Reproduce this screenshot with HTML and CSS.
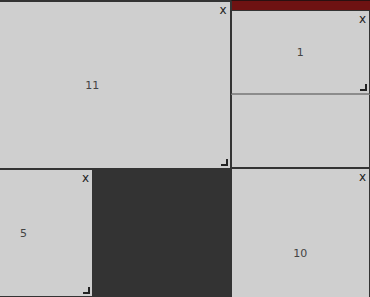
FILE: index.html
```html
<!DOCTYPE html>
<html>
<head>
<meta charset="utf-8">
<link rel="stylesheet" href="styles.css">
</head>
<body>
<div class="board">
  <div class="col col-left">
    <div class="tile tile-11">
      <span class="label">11</span>
      <span class="close">x</span>
      <span class="handle"></span>
    </div>
    <div class="row-bottom">
      <div class="tile tile-5">
        <span class="label">5</span>
        <span class="close">x</span>
        <span class="handle"></span>
      </div>
      <div class="empty"></div>
    </div>
  </div>
  <div class="col col-right">
    <div class="placeholder"></div>
    <div class="tile tile-1">
      <span class="label">1</span>
      <span class="close">x</span>
      <span class="handle"></span>
    </div>
    <div class="tile tile-blank"></div>
    <div class="tile tile-10">
      <span class="label">10</span>
      <span class="close">x</span>
      <span class="handle"></span>
    </div>
  </div>
</div>
</body>
</html>
```
FILE: styles.css
```css
html, body {
  margin: 0;
  padding: 0;
  width: 370px;
  height: 297px;
  overflow: hidden;
  background: #333333;
}
.board {
  display: flex;
  height: 297px;
  overflow: hidden;
  margin-left: -46px;
  font-family: "DejaVu Sans", "Liberation Sans", sans-serif;
}
.col {
  display: flex;
  flex-direction: column;
}
.col-left {
  width: 278px;
  padding-top: 1px;
}
.col-right {
  width: 140px;
}
.tile {
  position: relative;
  flex-shrink: 0;
  box-sizing: border-box;
  background: #cfcfcf;
  border: 1px solid #333333;
  display: flex;
  align-items: center;
  justify-content: center;
}
.tile-11 {
  height: 168px;
}
.row-bottom {
  display: flex;
}
.tile-5 {
  width: 139px;
  height: 128px;
}
.empty {
  flex: 1;
}
.placeholder {
  flex-shrink: 0;
  height: 10px;
  background: #6e1212;
  border-left: 1px solid #333333;
  border-top: 1px solid #2a1010;
  box-sizing: border-box;
}
.tile-1 {
  height: 85px;
  border-bottom: 2px solid #8c8c8c;
}
.tile-blank {
  height: 73px;
  border-top: none;
}
.tile-10 {
  height: 170px;
}
.label {
  font-size: 11px;
  color: #444444;
}
.close {
  position: absolute;
  top: 1px;
  right: 3px;
  font-size: 12px;
  line-height: 14px;
  color: #222222;
}
.handle {
  position: absolute;
  right: 2px;
  bottom: 2px;
  width: 5px;
  height: 5px;
  border-right: 2px solid #222222;
  border-bottom: 2px solid #222222;
}
```
